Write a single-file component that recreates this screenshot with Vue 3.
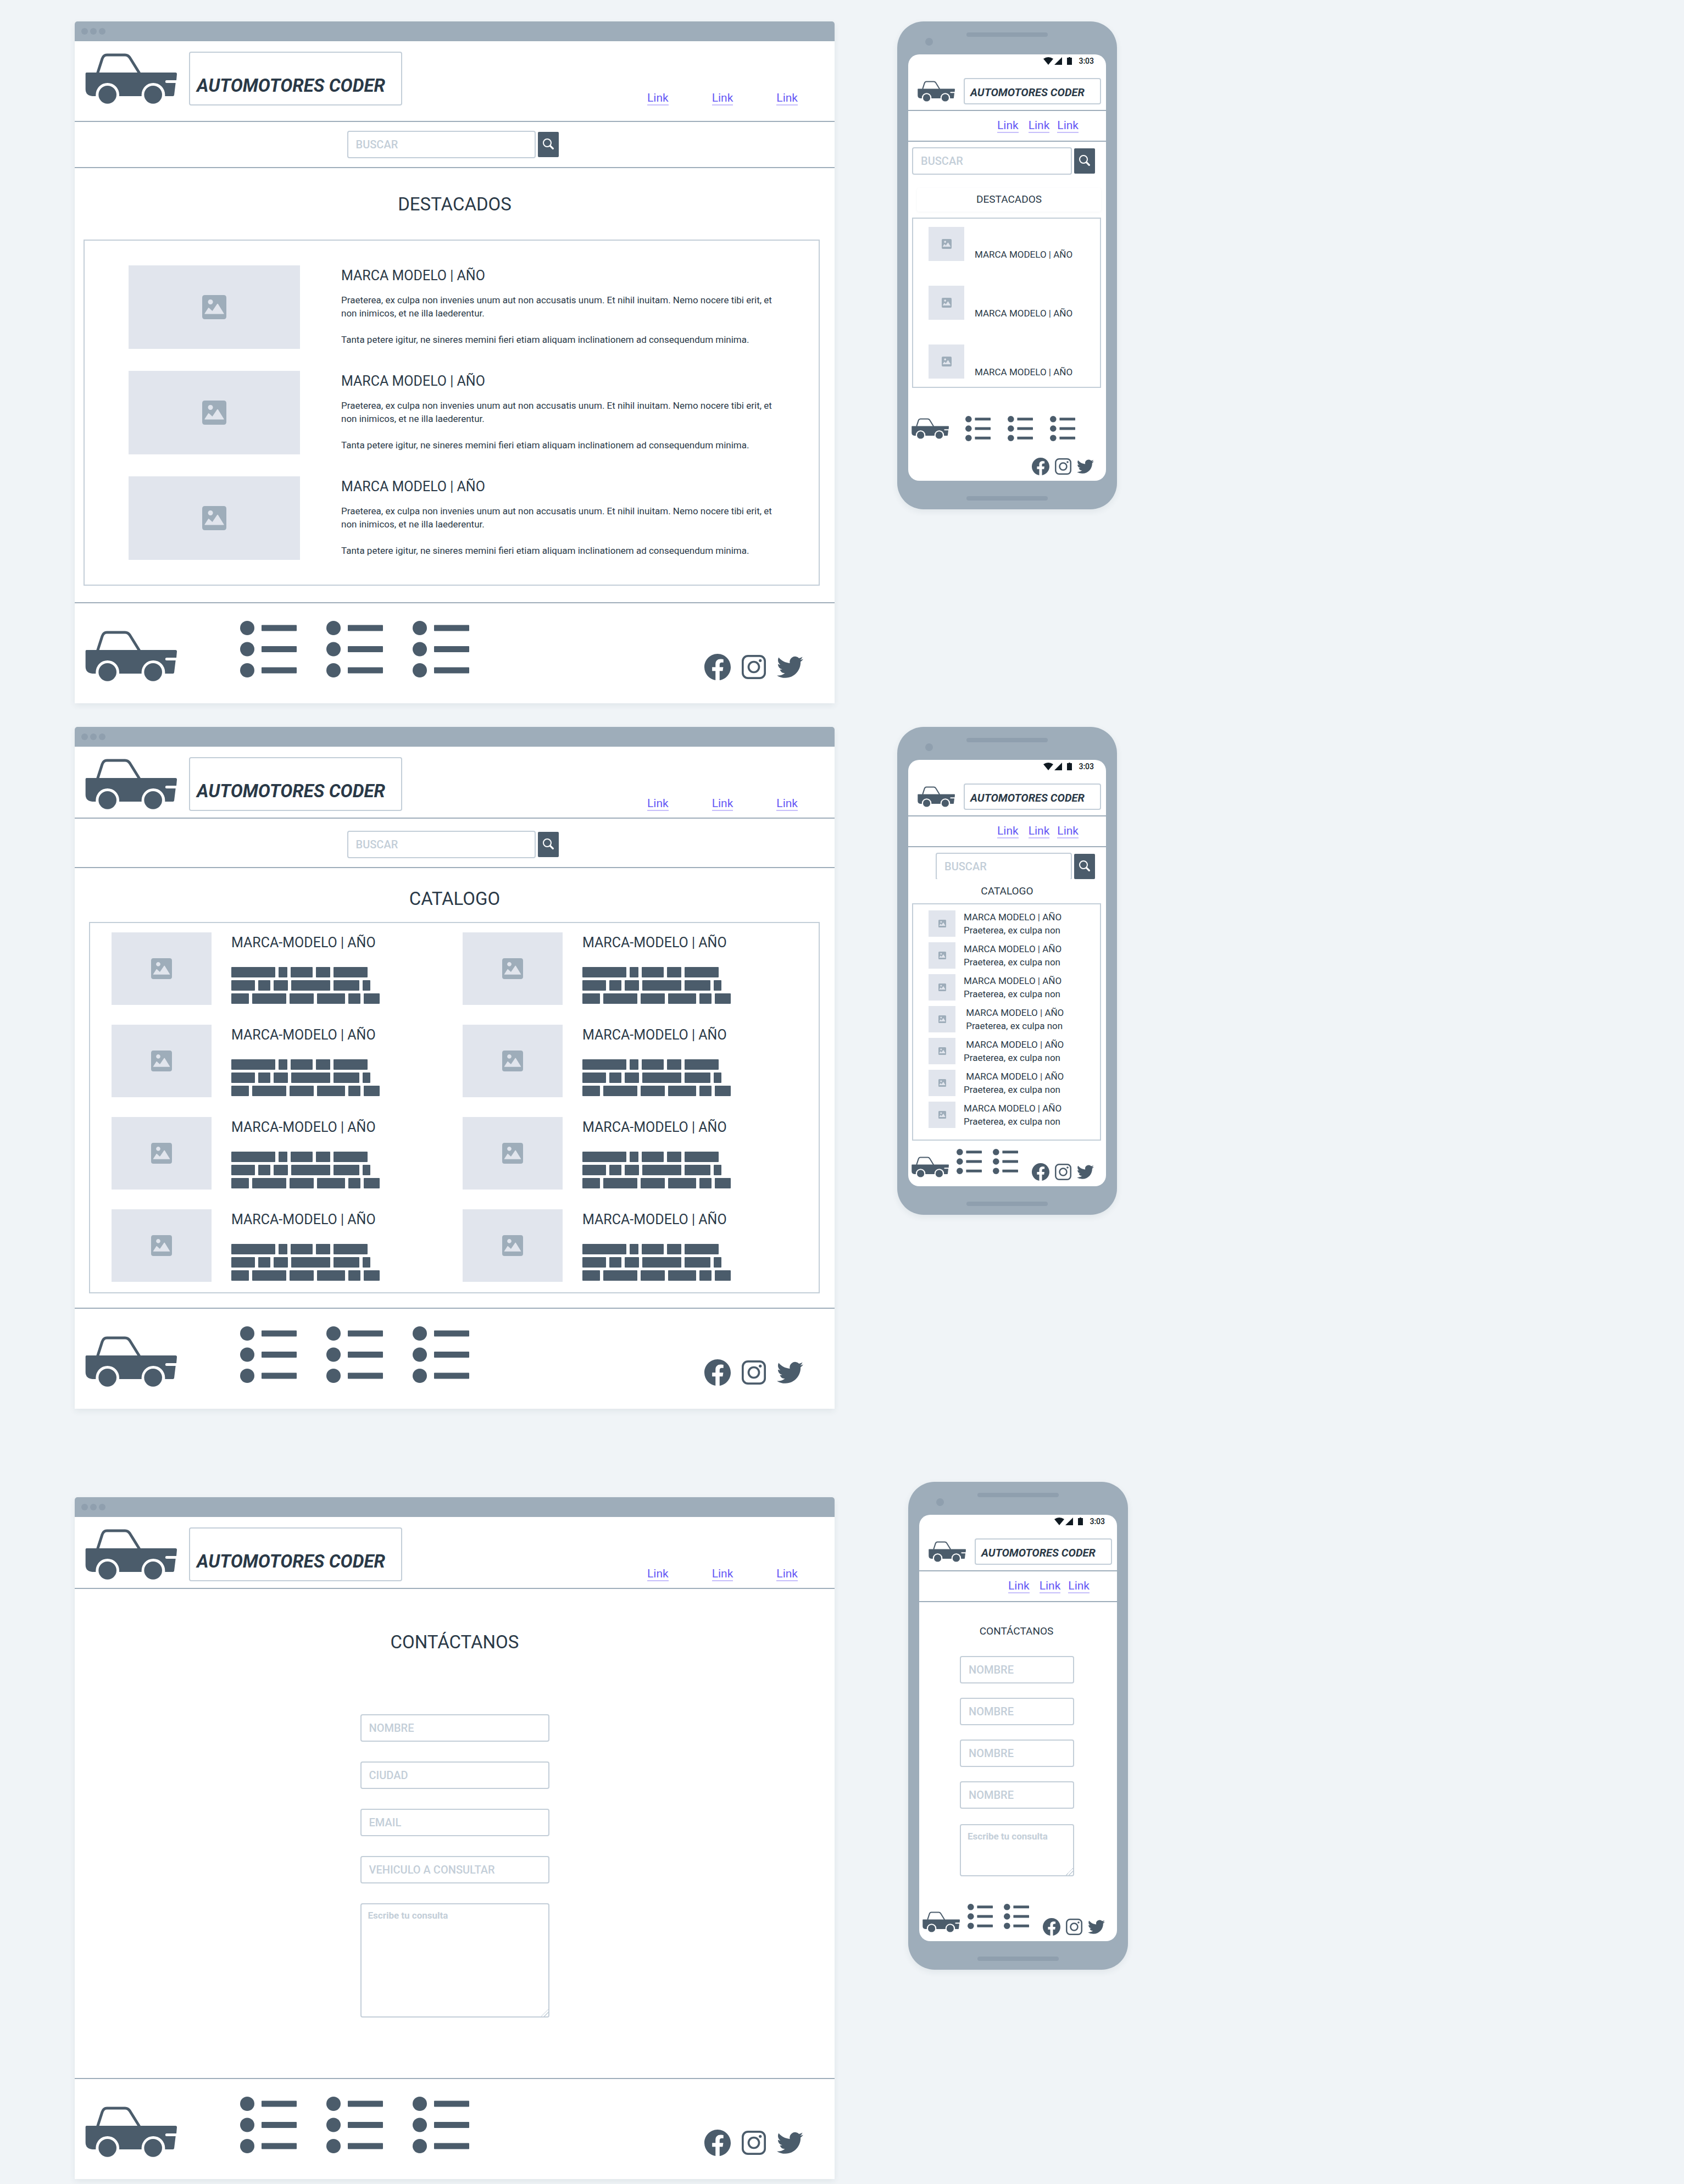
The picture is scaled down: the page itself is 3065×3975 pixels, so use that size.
<script setup>
const photoCard = 'MARCA MODELO | AÑO'
const catalogCard = 'MARCA-MODELO | AÑO'
const teaser = 'Praeterea, ex culpa non'

const screens = [
  { id: 'destacados', title: 'DESTACADOS', search: true, phoneLists: 3 },
  { id: 'catalogo', title: 'CATALOGO', search: true, phoneLists: 2 },
  { id: 'contacto', title: 'CONTÁCTANOS', search: false, phoneLists: 2 }
]

const fields = ['NOMBRE', 'CIUDAD', 'EMAIL', 'VEHICULO A CONSULTAR']

// widths of the placeholder words, one array per line
const words = [
  [80, 16, 40, 26, 62],
  [43, 22, 26, 71, 47, 14],
  [32, 62, 44, 51, 22, 29]
]

const phoneItems = [
  { title: photoCard, text: teaser },
  { title: photoCard, text: teaser },
  { title: photoCard, text: teaser },
  { title: ' ' + photoCard, text: ' ' + teaser },
  { title: ' ' + photoCard, text: teaser },
  { title: ' ' + photoCard, text: teaser },
  { title: photoCard, text: teaser }
]
</script>

<template>
  <svg class="sprite" aria-hidden="true">
    <symbol id="car" viewBox="0 0 501 276">
      <path d="M68 108 L93 30 Q100 9 119 9 H218 Q234 9 244 24 L296 108" fill="none" stroke="currentColor" stroke-width="15" />
      <path d="M8 105 H493 Q501 105 501 113 L498 147 H445 a7 7 0 0 0 0 15 H494 L486 228 Q485 234 479 234 H436 V226 A64 64 0 0 0 308 226 V234 H186 V226 A64 64 0 0 0 58 226 V234 H40 Q2 231 2 196 V111 Q2 105 8 105Z" fill="currentColor" />
      <circle cx="122" cy="226" r="49" fill="currentColor" />
      <circle cx="371" cy="226" r="49" fill="currentColor" />
    </symbol>
    <symbol id="list" viewBox="0 0 103 103">
      <g fill="currentColor">
        <circle cx="13" cy="13" r="13" /><circle cx="13" cy="51.5" r="13" /><circle cx="13" cy="90" r="13" />
        <rect x="39" y="7.5" width="64" height="11" rx="1" />
        <rect x="39" y="46" width="64" height="11" rx="1" />
        <rect x="39" y="84.5" width="64" height="11" rx="1" />
      </g>
    </symbol>
    <symbol id="photo" viewBox="0 0 44 44">
      <path fill="currentColor" fill-rule="evenodd" d="M5 0 H39 Q44 0 44 5 V39 Q44 44 39 44 H5 Q0 44 0 39 V5 Q0 0 5 0Z M15 8 a4.5 4.5 0 1 0 0.1 0Z M5 34.5 H39 Q40 34.5 39.5 33.5 L29 16.5 Q28 15 27 16.5 L18.5 29 L12.5 23.5 Q11.7 22.5 11 23.5 L4.5 33.5 Q4 34.5 5 34.5Z" />
    </symbol>
    <symbol id="magnifier" viewBox="0 0 60 60">
      <circle cx="24" cy="24" r="21" fill="none" stroke="currentColor" stroke-width="6" />
      <path d="M41 41 L55 55" stroke="currentColor" stroke-width="10" stroke-linecap="round" />
    </symbol>
    <symbol id="facebook" viewBox="0 0 16 16">
      <path fill="currentColor" d="M16 8.049c0-4.446-3.582-8.05-8-8.05C3.58 0-.002 3.603-.002 8.05c0 4.017 2.926 7.347 6.75 7.951v-5.625h-2.03V8.05H6.75V6.275c0-2.017 1.195-3.131 3.022-3.131.876 0 1.791.157 1.791.157v1.98h-1.009c-.993 0-1.303.621-1.303 1.258v1.51h2.218l-.354 2.326H9.25V16c3.824-.604 6.75-3.934 6.75-7.951z" />
    </symbol>
    <symbol id="instagram" viewBox="0 0 30 30">
      <rect x="1.25" y="1.25" width="27.5" height="27.5" rx="6.5" fill="none" stroke="currentColor" stroke-width="2.5" />
      <circle cx="15" cy="15" r="6.5" fill="none" stroke="currentColor" stroke-width="2.5" />
      <circle cx="23" cy="7" r="1.8" fill="currentColor" />
    </symbol>
    <symbol id="twitter" viewBox="0 1.85 24 20">
      <path fill="currentColor" d="M23.953 4.57a10 10 0 01-2.825.775 4.958 4.958 0 002.163-2.723c-.951.555-2.005.959-3.127 1.184a4.92 4.92 0 00-8.384 4.482C7.69 8.095 4.067 6.13 1.64 3.162a4.822 4.822 0 00-.666 2.475c0 1.71.87 3.213 2.188 4.096a4.904 4.904 0 01-2.228-.616v.06a4.923 4.923 0 003.946 4.827 4.996 4.996 0 01-2.212.085 4.936 4.936 0 004.604 3.417 9.867 9.867 0 01-6.102 2.105c-.39 0-.779-.023-1.17-.067a13.995 13.995 0 007.557 2.209c9.053 0 13.998-7.496 13.998-13.985 0-.21 0-.42-.015-.63A9.935 9.935 0 0024 4.59z" />
    </symbol>
  </svg>

  <main class="board">
    <template v-for="s in screens" :key="s.id">
      <section class="window" :class="s.id">
        <div class="titlebar"><i></i><i></i><i></i></div>

        <header class="site-header">
          <svg class="car"><use href="#car" /></svg>
          <h1 class="brand">AUTOMOTORES CODER</h1>
          <nav class="links">
            <a v-for="n in 3" :key="n" href="#">Link</a>
          </nav>
        </header>

        <form v-if="s.search" class="search" @submit.prevent>
          <input class="field" type="text" placeholder="BUSCAR" aria-label="Buscar">
          <button type="submit" aria-label="Buscar"><svg><use href="#magnifier" /></svg></button>
        </form>

        <h2 class="heading">{{ s.title }}</h2>

        <div v-if="s.id === 'destacados'" class="panel featured">
          <article v-for="n in 3" :key="n">
            <div class="photo"><svg><use href="#photo" /></svg></div>
            <div class="copy">
              <h3>{{ photoCard }}</h3>
              <p>Praeterea, ex culpa non invenies unum aut non accusatis unum. Et nihil inuitam. Nemo nocere tibi erit, et non inimicos, et ne illa laederentur.</p>
              <p>Tanta petere igitur, ne sineres memini fieri etiam aliquam inclinationem ad consequendum minima.</p>
            </div>
          </article>
        </div>

        <div v-else-if="s.id === 'catalogo'" class="panel catalog">
          <article v-for="n in 8" :key="n">
            <div class="photo"><svg><use href="#photo" /></svg></div>
            <div class="copy">
              <h3>{{ catalogCard }}</h3>
              <div class="blocks">
                <div v-for="(line, i) in words" :key="i" class="line">
                  <span v-for="(w, j) in line" :key="j" :style="{ width: w + 'px' }"></span>
                </div>
              </div>
            </div>
          </article>
        </div>

        <form v-else class="contact" @submit.prevent>
          <input v-for="f in fields" :key="f" class="field" type="text" :placeholder="f" :aria-label="f">
          <textarea class="field" placeholder="Escribe tu consulta" aria-label="Consulta"></textarea>
        </form>

        <footer class="site-footer">
          <svg class="car"><use href="#car" /></svg>
          <div class="lists">
            <svg v-for="n in 3" :key="n"><use href="#list" /></svg>
          </div>
          <div class="social">
            <svg class="fb"><use href="#facebook" /></svg>
            <svg class="ig"><use href="#instagram" /></svg>
            <svg class="tw"><use href="#twitter" /></svg>
          </div>
        </footer>
      </section>

      <section class="phone" :class="s.id">
        <span class="speaker top"></span>
        <span class="camera"></span>
        <span class="speaker bottom"></span>
        <div class="display">
          <div class="status">
            <svg viewBox="0 0 52 14">
              <path d="M0 3 Q9 -3 18 3 L9 14Z" />
              <path d="M20 14 L34 0 V14Z" />
              <path d="M43 1 H46 V0 H49 V1 H52 V14 H43Z" />
            </svg>
            <time>3:03</time>
          </div>

          <header class="site-header">
            <svg class="car"><use href="#car" /></svg>
            <h1 class="brand">AUTOMOTORES CODER</h1>
          </header>
          <nav class="links">
            <a v-for="n in 3" :key="n" href="#">Link</a>
          </nav>

          <form v-if="s.search" class="search" @submit.prevent>
            <input class="field" type="text" placeholder="BUSCAR" aria-label="Buscar">
            <button type="submit" aria-label="Buscar"><svg><use href="#magnifier" /></svg></button>
          </form>

          <h2 class="heading">{{ s.title }}</h2>

          <div v-if="s.id === 'destacados'" class="panel featured">
            <article v-for="n in 3" :key="n">
              <div class="photo"><svg><use href="#photo" /></svg></div>
              <h3>{{ photoCard }}</h3>
            </article>
          </div>

          <div v-else-if="s.id === 'catalogo'" class="panel catalog">
            <article v-for="(item, i) in phoneItems" :key="i">
              <div class="photo"><svg><use href="#photo" /></svg></div>
              <div class="copy">
                <h3>{{ item.title }}</h3>
                <p>{{ item.text }}</p>
              </div>
            </article>
          </div>

          <form v-else class="contact" @submit.prevent>
            <input v-for="n in 4" :key="n" class="field" type="text" placeholder="NOMBRE" aria-label="Nombre">
            <textarea class="field" placeholder="Escribe tu consulta" aria-label="Consulta"></textarea>
          </form>

          <footer class="site-footer">
            <svg class="car"><use href="#car" /></svg>
            <div class="lists">
              <svg v-for="n in s.phoneLists" :key="n"><use href="#list" /></svg>
            </div>
            <div class="social">
              <svg class="fb"><use href="#facebook" /></svg>
              <svg class="ig"><use href="#instagram" /></svg>
              <svg class="tw"><use href="#twitter" /></svg>
            </div>
          </footer>
        </div>
      </section>
    </template>
  </main>
</template>

<style>
body { background: #f0f4f7; }
</style>

<style scoped>
.sprite { position: absolute; width: 0; height: 0; }

.board {
  display: grid;
  grid-template-columns: minmax(0, 1383fr) 534px minmax(0, 1012fr);
  row-gap: 43px;
  align-items: start;
  padding: 39px 0 9px 136px;
  color: #2a3947;
  font-family: Roboto, "Open Sans", sans-serif;
}
.board * { box-sizing: border-box; }
h1, h2, h3, p { margin: 0; font-weight: 400; }
svg { display: block; flex: none; color: #4b5c6b; }

/* shared pieces */
.brand {
  border: 2px solid #c3ced8;
  border-radius: 4px;
  font-weight: 700;
  font-style: italic;
  white-space: nowrap;
}
.links a {
  border-bottom: 2px solid #c6befb;
  color: #6557f5;
  font-size: 21px;
  line-height: 24px;
  text-decoration: none;
}
.field {
  display: block;
  width: 100%;
  height: 50px;
  padding: 0 14px;
  border: 2px solid #c3ced8;
  border-radius: 4px;
  background: #fff;
  font-family: inherit;
  font-size: 20px;
  font-weight: 500;
  outline: none;
}
.field::placeholder { color: #c3ced8; opacity: 1; }
textarea.field {
  padding: 8px 12px;
  font-size: 17px;
  font-weight: 700;
  line-height: 24px;
}
textarea.field::-webkit-resizer {
  background: linear-gradient(135deg, transparent 55%, #c3ced8 55%, #c3ced8 60%, transparent 60%, transparent 72%, #c3ced8 72%, #c3ced8 77%, transparent 77%);
}
.search { display: flex; align-items: center; }
.search button {
  display: flex;
  flex: none;
  align-items: center;
  justify-content: center;
  width: 38px;
  height: 46px;
  margin-left: 4px;
  padding: 0 0 2px;
  border: 0;
  border-radius: 2px;
  background: #4b5c6b;
}
.search button svg { width: 20px; height: 20px; color: #fff; }
.panel { border: 2px solid #c3ced8; }
.panel article { display: flex; }
.photo {
  display: flex;
  flex: none;
  align-items: center;
  justify-content: center;
  background: #e1e5ed;
}
.photo svg { color: #9eadba; }
.heading { text-align: center; }
.lists, .social { display: flex; align-items: center; }

/* desktop window */
.window {
  grid-column: 1;
  border-radius: 5px 5px 0 0;
  background: #fff;
  box-shadow: 0 4px 12px rgba(40, 60, 80, .08);
}
.window.contacto { margin-top: 118px; }
.titlebar {
  display: flex;
  align-items: center;
  gap: 4px;
  height: 36px;
  padding-left: 12px;
  border-radius: 5px 5px 0 0;
  background: #9eadba;
}
.titlebar i { width: 12px; height: 12px; border-radius: 50%; background: #8f9fae; }
.window .site-header {
  display: flex;
  align-items: flex-end;
  padding: 19px 67px 12px 19px;
  border-bottom: 2px solid #9eadba;
}
.window.destacados .site-header { padding-bottom: 28px; }
.window .car { width: 167px; height: 98px; }
.window .brand {
  width: 388px;
  height: 98px;
  margin-left: 22px;
  padding: 38px 0 0 12px;
  font-size: 33px;
  line-height: 44px;
}
.window .links { display: flex; gap: 79px; margin-left: auto; }
.window .search {
  justify-content: center;
  padding: 16px 7px 16px 0;
  border-bottom: 2px solid #9eadba;
}
.window.catalogo .search { padding-top: 22px; }
.window .search .field { width: 343px; }
.window .heading { padding-top: 2px; font-size: 33px; line-height: 128px; }
.window.catalogo .heading { padding-top: 14px; line-height: 84px; }
.window.contacto .heading { line-height: 190px; }
.window h3 { padding-top: 1px; font-size: 25px; line-height: 32px; }
.window .featured {
  display: flex;
  flex-direction: column;
  gap: 40px;
  margin: 0 27px 30px 16px;
  padding: 45px 60px 45px 80px;
}
.window .featured .photo { width: 312px; height: 152px; }
.window .featured .photo svg { width: 44px; height: 44px; }
.window .featured .copy { margin-left: 75px; padding-top: 2px; }
.window .featured p { font-size: 17px; line-height: 24px; }
.window .featured h3 { margin-bottom: 16px; }
.window .featured p + p { margin-top: 24px; }
.window .catalog {
  display: grid;
  grid-template-columns: 1fr 1fr;
  row-gap: 36px;
  margin: 0 27px 26px 26px;
  padding: 17px 9px 19px 39px;
}
.window .catalog .photo { width: 182px; height: 132px; }
.window .catalog .photo svg { width: 38px; height: 38px; }
.window .catalog .copy { margin-left: 36px; padding-top: 2px; }
.blocks { display: flex; flex-direction: column; gap: 5px; margin-top: 28px; }
.line { display: flex; gap: 6px; }
.line span { height: 19px; border-radius: 1px; background: #4b5c6b; }
.window .contact {
  display: flex;
  flex-direction: column;
  gap: 36px;
  width: 344px;
  margin: 36px auto 110px;
}
.window textarea { height: 208px; }
.window .site-footer {
  display: flex;
  align-items: flex-start;
  padding: 32px 57px 40px 19px;
  border-top: 2px solid #9eadba;
}
.window .site-footer .car { height: 92px; margin-top: 18px; }
.window .lists { gap: 54px; margin-left: 115px; }
.window .lists svg { width: 103px; height: 103px; }
.window .social { gap: 20px; margin: 60px 0 0 auto; }
.window .fb { width: 48px; height: 48px; }
.window .ig { width: 44px; height: 44px; }
.window .tw { width: 48px; height: 40px; }

/* phone */
.phone {
  position: relative;
  grid-column: 2;
  width: 400px;
  margin-left: 114px;
  padding: 60px 20px 52px;
  border-radius: 48px;
  background: #9eadba;
  box-shadow: 0 4px 12px rgba(40, 60, 80, .08);
}
.phone.contacto { margin: 90px 0 0 134px; }
.speaker {
  position: absolute;
  left: 126px;
  width: 148px;
  height: 8px;
  border-radius: 4px;
  background: #8f9fae;
}
.speaker.top { top: 20px; }
.speaker.bottom { bottom: 16px; }
.camera {
  position: absolute;
  top: 30px;
  left: 51px;
  width: 14px;
  height: 14px;
  border-radius: 50%;
  background: #8f9fae;
}
.display {
  display: flex;
  flex-direction: column;
  min-height: 776px;
  border-radius: 20px;
  background: #fff;
}
.status {
  display: flex;
  align-items: center;
  justify-content: flex-end;
  gap: 12px;
  height: 24px;
  padding-right: 22px;
  color: #101a22;
  font-size: 14px;
  font-weight: 500;
}
.status svg { width: 52px; height: 14px; fill: #101a22; }
.phone .site-header {
  display: flex;
  align-items: center;
  padding: 19px 9px 10px 17px;
  border-bottom: 2px solid #9eadba;
}
.phone .car { width: 68px; height: 38px; }
.phone .brand {
  flex: 1;
  height: 48px;
  margin-left: 16px;
  padding: 4px 0 0 10px;
  font-size: 20px;
  line-height: 40px;
}
.phone .links {
  display: flex;
  align-items: center;
  justify-content: flex-end;
  gap: 18px;
  height: 56px;
  padding-right: 50px;
  border-bottom: 2px solid #9eadba;
}
.phone .links a:last-child { margin-left: -4px; }
.phone .search { padding: 10px 20px 0 7px; }
.phone.catalogo .search {
  align-items: flex-start;
  height: 58px;
  padding-left: 50px;
  overflow: hidden;
}
.phone.catalogo .search button { margin-top: 2px; }
.phone .heading { font-size: 19px; line-height: 44px; }
.phone.destacados .heading {
  margin: 24px 9px 11px 16px;
  padding-bottom: 2px;
  border-radius: 4px;
  line-height: 41px;
  box-shadow: 0 1px 4px rgba(40, 60, 80, .05);
}
.phone.contacto .heading { padding: 8px 6px 0 0; line-height: 90px; }
.phone h3, .phone p { font-size: 17px; line-height: 24px; white-space: pre; }
.phone .panel {
  display: flex;
  flex-direction: column;
  margin: 0 9px 0 7px;
  padding-left: 28px;
}
.phone .featured { gap: 45px; padding-top: 15px; padding-bottom: 15px; }
.phone .featured article { align-items: flex-end; }
.phone .featured .photo { width: 65px; height: 62px; }
.phone .featured .photo svg { width: 18px; height: 18px; }
.phone .featured h3 { margin-left: 19px; }
.phone .catalog { gap: 10px; padding-top: 11px; padding-bottom: 21px; }
.phone .catalog .photo { width: 49px; height: 48px; }
.phone .catalog .photo svg { width: 14px; height: 14px; }
.phone .catalog .copy { margin-left: 15px; }
.phone .contact {
  display: flex;
  flex-direction: column;
  gap: 26px;
  width: 208px;
  margin-left: 74px;
}
.phone textarea { height: 95px; margin-top: 2px; }
.phone .site-footer {
  display: flex;
  align-items: flex-end;
  margin-top: auto;
  padding: 0 22px 10px 6px;
}
.phone .lists { gap: 20px; margin: 0 0 12px 14px; }
.phone .lists svg { width: 46px; height: 46px; }
.phone .site-footer .car { margin-bottom: 6px; }
.phone .social { gap: 10px; margin-left: auto; }
.phone.destacados .site-footer { flex-wrap: wrap; row-gap: 30px; align-items: center; }
.phone.destacados .site-footer .car { margin-bottom: 0; }
.phone.destacados .lists { gap: 31px; margin: 0 0 0 30px; }
.phone.destacados .social { justify-content: flex-end; width: 100%; }
.phone .fb { width: 32px; height: 32px; }
.phone .ig { width: 30px; height: 30px; }
.phone .tw { width: 31px; height: 26px; }
</style>
